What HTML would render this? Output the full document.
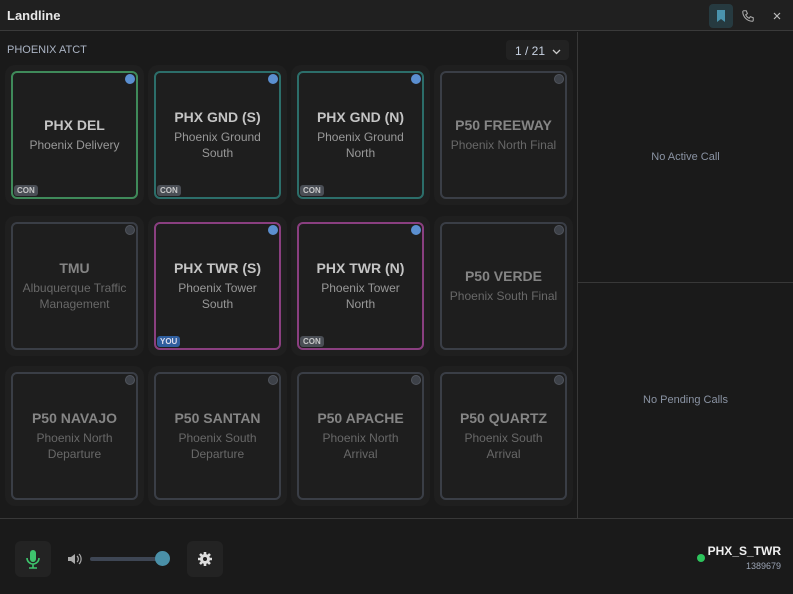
<!DOCTYPE html>
<html><head><meta charset="utf-8"><style>
*{box-sizing:border-box;margin:0;padding:0}
body{width:793px;height:594px;background:#1a1a1a;font-family:"Liberation Sans",sans-serif;position:relative;overflow:hidden;color:#ccc}
.tb{position:absolute;left:0;top:0;width:793px;height:31px;background:#202020;border-bottom:1px solid #3a3a3a}
.tb .t{position:absolute;left:7px;top:8px;font-size:13px;font-weight:bold;color:#e8e8e8}
.bm{position:absolute;left:709px;top:4px;width:24px;height:24px;background:#263a40;border-radius:4px}
.side{position:absolute;left:577px;top:32px;width:1px;height:486px;background:#383838}
.hsplit{position:absolute;left:578px;top:282px;width:215px;height:1px;background:#383838}
.foot{position:absolute;left:0;top:518px;width:793px;height:1px;background:#383838}
.msg{position:absolute;left:578px;width:215px;text-align:center;font-size:11px;color:#8a93a3}
.hdr{position:absolute;left:7px;top:44px;font-size:11px;color:#aab3c3}
.pg{position:absolute;left:506px;top:40px;width:63px;height:20px;background:#222;border-radius:4px;font-size:12px;color:#c9d3e3;padding:4px 0 0 9px}
.card{position:absolute;width:139px;height:140px;background:#1f1f1f;border-radius:10px}
.tile{position:absolute;left:6px;top:6px;width:127px;height:128px;border:2px solid #3a3e46;border-radius:6px;background:#1e1e1e;display:flex;flex-direction:column;justify-content:center;align-items:center;text-align:center}
.tile b{font-size:14px;color:#858585;margin-bottom:4px}
.tile span{font-size:12px;color:#686868;line-height:16px}
.dot{position:absolute;right:1px;top:1px;width:10px;height:10px;border-radius:50%;background:#3d4148;border:1px solid #50545c}
.on b{color:#c4c4c4}.on span{color:#989898}
.on .dot{background:#5b8fd0;border-color:#5b8fd0}
.g{border-color:#3f8a5a}.c{border-color:#2c6e6a}.p{border-color:#8a3f80}
.badge{position:absolute;left:1px;bottom:1px;font-size:8px;font-weight:bold;padding:1px 3px;border-radius:3px;background:#4a4e55;color:#c8c8c8}
.you{background:#2f5e9e;color:#dde}
</style></head><body>
<div class="tb"><div class="t">Landline</div>
<div class="bm"><svg width="24" height="24"><path d="M8 6h8v12l-4-3-4 3z" fill="#4a93ad"/></svg></div>
<svg style="position:absolute;left:741px;top:9px" width="14" height="14" viewBox="0 0 24 24"><path d="M5 3h4l2 5-3 2a12 12 0 0 0 6 6l2-3 5 2v4a2 2 0 0 1-2 2A17 17 0 0 1 3 5a2 2 0 0 1 2-2" fill="none" stroke="#aaa" stroke-width="1.8"/></svg>
<svg style="position:absolute;left:773px;top:12px" width="8" height="8"><path d="M1 1l6 6M7 1l-6 6" stroke="#bbb" stroke-width="1.2"/></svg>
</div>
<div class="hdr">PHOENIX ATCT</div>
<div class="pg">1 / 21 <svg width="9" height="6" style="margin-left:4px"><path d="M1 1l3.5 3.5L8 1" fill="none" stroke="#ccc" stroke-width="1.3"/></svg></div>
<div class="side"></div><div class="hsplit"></div><div class="foot"></div>
<div class="msg" style="top:151px">No Active Call</div>
<div class="msg" style="top:394px">No Pending Calls</div>

<div class="card" style="left:5px;top:65px"><div class="tile on g"><b>PHX DEL</b><span>Phoenix Delivery</span><div class="dot"></div><div class="badge">CON</div></div></div>
<div class="card" style="left:148px;top:65px"><div class="tile on c"><b>PHX GND (S)</b><span>Phoenix Ground<br>South</span><div class="dot"></div><div class="badge">CON</div></div></div>
<div class="card" style="left:291px;top:65px"><div class="tile on c"><b>PHX GND (N)</b><span>Phoenix Ground<br>North</span><div class="dot"></div><div class="badge">CON</div></div></div>
<div class="card" style="left:434px;top:65px"><div class="tile"><b>P50 FREEWAY</b><span>Phoenix North Final</span><div class="dot"></div></div></div>

<div class="card" style="left:5px;top:216px"><div class="tile"><b>TMU</b><span>Albuquerque Traffic<br>Management</span><div class="dot"></div></div></div>
<div class="card" style="left:148px;top:216px"><div class="tile on p"><b>PHX TWR (S)</b><span>Phoenix Tower<br>South</span><div class="dot"></div><div class="badge you">YOU</div></div></div>
<div class="card" style="left:291px;top:216px"><div class="tile on p"><b>PHX TWR (N)</b><span>Phoenix Tower<br>North</span><div class="dot"></div><div class="badge">CON</div></div></div>
<div class="card" style="left:434px;top:216px"><div class="tile"><b>P50 VERDE</b><span>Phoenix South Final</span><div class="dot"></div></div></div>

<div class="card" style="left:5px;top:366px"><div class="tile"><b>P50 NAVAJO</b><span>Phoenix North<br>Departure</span><div class="dot"></div></div></div>
<div class="card" style="left:148px;top:366px"><div class="tile"><b>P50 SANTAN</b><span>Phoenix South<br>Departure</span><div class="dot"></div></div></div>
<div class="card" style="left:291px;top:366px"><div class="tile"><b>P50 APACHE</b><span>Phoenix North<br>Arrival</span><div class="dot"></div></div></div>
<div class="card" style="left:434px;top:366px"><div class="tile"><b>P50 QUARTZ</b><span>Phoenix South<br>Arrival</span><div class="dot"></div></div></div>

<div style="position:absolute;left:15px;top:541px;width:36px;height:36px;background:#232323;border-radius:6px">
<svg width="36" height="36"><rect x="15" y="9" width="6" height="12" rx="3" fill="#3ec46d"/><path d="M12 17a6 6 0 0 0 12 0M18 23v4M14 27h8" fill="none" stroke="#3ec46d" stroke-width="1.6"/></svg></div>
<svg style="position:absolute;left:66px;top:551px" width="16" height="16"><path d="M2 6h3l4-3v10l-4-3H2z" fill="#aaa"/><path d="M11 5a4 4 0 0 1 0 6M13 3a7 7 0 0 1 0 10" fill="none" stroke="#aaa" stroke-width="1.2"/></svg>
<div style="position:absolute;left:90px;top:557px;width:72px;height:4px;background:#3e4654;border-radius:2px"></div>
<div style="position:absolute;left:155px;top:551px;width:15px;height:15px;background:#4a90a8;border-radius:50%"></div>
<div style="position:absolute;left:187px;top:541px;width:36px;height:36px;background:#232323;border-radius:6px">
<svg width="36" height="36" viewBox="0 0 36 36"><g fill="#ddd"><circle cx="18" cy="18" r="5"/><g stroke="#ddd" stroke-width="2.6"><path d="M18 11v14M11 18h14M13 13l10 10M23 13L13 23"/></g></g><circle cx="18" cy="18" r="2" fill="#232323"/></svg></div>
<div style="position:absolute;left:697px;top:554px;width:8px;height:8px;border-radius:50%;background:#2dc45c"></div>
<div style="position:absolute;right:12px;top:544px;font-size:12px;font-weight:bold;color:#f0f0f0">PHX_S_TWR</div>
<div style="position:absolute;right:12px;top:561px;font-size:9px;color:#9aa3b3">1389679</div>
</body></html>
